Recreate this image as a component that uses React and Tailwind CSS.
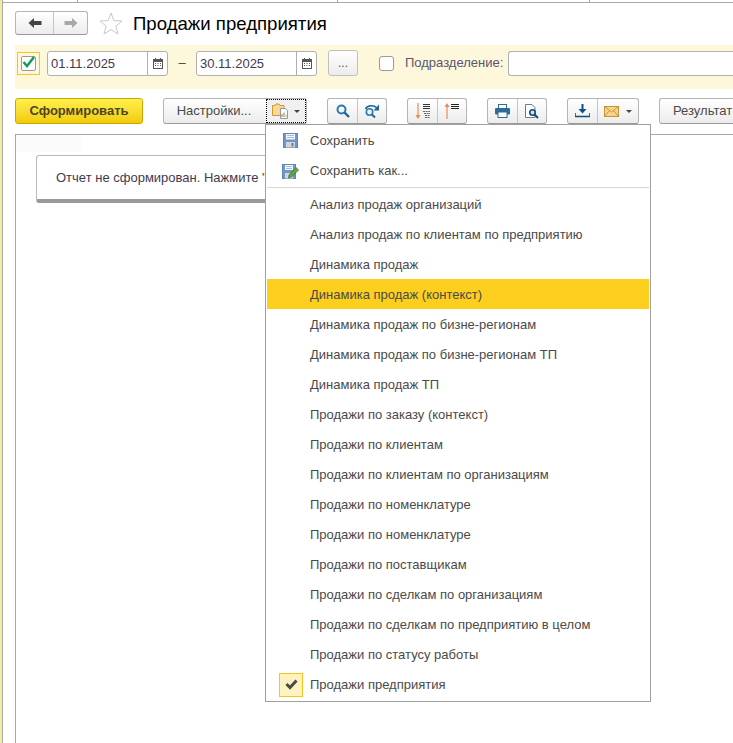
import React from "react";

const menuItems = [
  "Анализ продаж организаций",
  "Анализ продаж по клиентам по предприятию",
  "Динамика продаж",
  "Динамика продаж (контекст)",
  "Динамика продаж по бизне-регионам",
  "Динамика продаж по бизне-регионам ТП",
  "Динамика продаж ТП",
  "Продажи по заказу (контекст)",
  "Продажи по клиентам",
  "Продажи по клиентам по организациям",
  "Продажи по номенклатуре",
  "Продажи по номенклатуре",
  "Продажи по поставщикам",
  "Продажи по сделкам по организациям",
  "Продажи по сделкам по предприятию в целом",
  "Продажи по статусу работы",
  "Продажи предприятия",
];

const ArrowIcon = ({ color, flip }) => (
  <svg width="14" height="12" viewBox="0 0 14 12" className={flip ? "-scale-x-100" : ""}>
    <path d="M0.5 6 L6 1 V4 H13.5 V8 H6 V11 Z" fill={color} />
  </svg>
);

const CalendarIcon = () => (
  <svg width="10" height="11" viewBox="0 0 10 11">
    <rect x="0.5" y="1.5" width="9" height="9" fill="#fff" stroke="#555" />
    <rect x="0" y="1" width="10" height="3" fill="#555" />
    <rect x="2" y="0" width="1" height="2" fill="#555" />
    <rect x="7" y="0" width="1" height="2" fill="#555" />
    <path d="M2 5.5h1M4.5 5.5h1M7 5.5h1M2 7.5h1M4.5 7.5h1M7 7.5h1" stroke="#555" />
  </svg>
);

const SearchIcon = () => (
  <svg width="14" height="14" viewBox="0 0 14 14">
    <circle cx="5.5" cy="5.5" r="4" fill="none" stroke="#2a7ab0" strokeWidth="2" />
    <path d="M8.5 8.5 L13 13" stroke="#1d6596" strokeWidth="2.4" />
  </svg>
);

const RefreshSearchIcon = () => (
  <svg width="16" height="15" viewBox="0 0 16 15">
    <path d="M1.5 5 C3 1.5 9 0.5 12.5 3.5" fill="none" stroke="#1d6596" strokeWidth="1.6" />
    <path d="M15 0.5 V6.5 H9.5 Z" fill="#1d6596" />
    <circle cx="5.5" cy="8" r="3.2" fill="none" stroke="#2a7ab0" strokeWidth="1.6" />
    <path d="M8 10.5 L11 13.5" stroke="#1d6596" strokeWidth="2" />
  </svg>
);

const SortDownIcon = () => (
  <svg width="16" height="16" viewBox="0 0 16 16">
    <path d="M3 0 V13" stroke="#ee8a55" strokeWidth="1.2" />
    <path d="M0.5 12 H5.5 L3 16 Z" fill="#ee8a55" />
    <path d="M8 1.5h7M8 3.5h7M8 5.5h7" stroke="#333" strokeWidth="1" />
    <path d="M8 8.5h7M9 10.5h6M10 12.5h5M10 14.5h5" stroke="#666" strokeWidth="1" strokeDasharray="2 0.6" />
  </svg>
);

const SortUpIcon = () => (
  <svg width="16" height="16" viewBox="0 0 16 16">
    <path d="M3 3 V16" stroke="#ee8a55" strokeWidth="1.2" />
    <path d="M0.5 4 H5.5 L3 0 Z" fill="#ee8a55" />
    <path d="M7 1.5h8M7 3.5h8M7 5.5h8" stroke="#222" strokeWidth="1" />
  </svg>
);

const PrintIcon = () => (
  <svg width="15" height="14" viewBox="0 0 15 14">
    <rect x="3.5" y="0.5" width="8" height="5" fill="#fff" stroke="#2f6a99" />
    <rect x="0" y="4" width="15" height="6.5" rx="1" fill="#2f6a99" />
    <rect x="3" y="8" width="9" height="5.5" fill="#fff" stroke="#2f6a99" />
  </svg>
);

const PreviewIcon = () => (
  <svg width="15" height="15" viewBox="0 0 15 15">
    <path d="M0.5 0.5 H7 L10 3.5 V13.5 H0.5 Z" fill="#fff" stroke="#5d7f9b" />
    <circle cx="7.5" cy="8.5" r="2.7" fill="#cfe3f2" stroke="#104a75" strokeWidth="1.6" />
    <path d="M9.5 10.5 L13 14" stroke="#104a75" strokeWidth="2" />
  </svg>
);

const DownloadIcon = () => (
  <svg width="15" height="14" viewBox="0 0 15 14">
    <path d="M7.5 0 V6" stroke="#0f4f7e" strokeWidth="2" />
    <path d="M3.5 5 H11.5 L7.5 9.5 Z" fill="#0f4f7e" />
    <path d="M0 9 V12.5 H15 V9" fill="none" stroke="#0f4f7e" strokeWidth="1.6" />
  </svg>
);

const MailIcon = () => (
  <svg width="15" height="11" viewBox="0 0 15 11">
    <rect x="0.5" y="0.5" width="14" height="10" fill="#f6d48a" stroke="#c8933a" />
    <path d="M0.5 0.5 L7.5 6 L14.5 0.5 M0.5 10.5 L5.5 4.5 M14.5 10.5 L9.5 4.5" fill="none" stroke="#c8933a" />
  </svg>
);

const ReportsIcon = () => (
  <svg width="18" height="16" viewBox="0 0 18 16" className="shrink-0">
    <path d="M0.5 2.5 H3 L4 1 H7 L8 2.5 H12 V12.5 H0.5 Z" fill="#f8d98d" stroke="#c9983f" />
    <path d="M8.5 5.5 H13.5 L15.5 7.5 V15.5 H8.5 Z" fill="#fff" stroke="#8a9aa8" />
    <path d="M10 14v-3" stroke="#d8503a" />
    <path d="M12 14v-4.5" stroke="#55a050" />
    <path d="M14 14v-2" stroke="#d8a03a" />
  </svg>
);

const SaveIcon = () => (
  <svg width="15" height="15" viewBox="0 0 15 15">
    <rect x="0.5" y="0.5" width="14" height="14" fill="#6f96c6" stroke="#5f86b5" />
    <rect x="3" y="1" width="9" height="5.5" fill="#f2f6fa" />
    <path d="M4 2.5h7M4 4.5h7" stroke="#a5bdd8" />
    <rect x="3" y="9" width="9" height="5.5" fill="#d2d5da" />
    <rect x="8.5" y="10" width="2" height="3.5" fill="#6d7d90" />
  </svg>
);

const SaveAsIcon = () => (
  <svg width="17" height="16" viewBox="0 0 17 16">
    <rect x="0.5" y="1.5" width="13" height="14" fill="#6f96c6" stroke="#5f86b5" />
    <rect x="3" y="2" width="8" height="5" fill="#f2f6fa" />
    <path d="M4 3.5h6M4 5.5h6" stroke="#a5bdd8" />
    <rect x="3" y="10" width="8" height="5.5" fill="#d2d5da" />
    <path d="M7 12 L14 4.5 L16.5 7 L9.5 14 L6.5 15 Z" fill="#5fa83f" stroke="#3d7a2a" strokeWidth="0.8" />
  </svg>
);

const CheckMark = () => (
  <svg width="13" height="11" viewBox="0 0 13 11">
    <path d="M1.5 5 L5 8.5 L11.5 1.5" fill="none" stroke="#4a4a4a" strokeWidth="3" />
  </svg>
);

const Caret = () => <span className="h-0 w-0 border-x-[3px] border-t-[3px] border-x-transparent border-t-[#444]" />;

const btnBg = "bg-gradient-to-b from-white to-[#ececec]";

const ButtonGroup = ({ className, children }) => (
  <div className={`flex h-[26px] shrink-0 rounded-[3px] border border-[#b4b4b4] border-b-[#999] ${btnBg} ${className}`}>
    {children}
  </div>
);

const IconCell = ({ width, divider, children }) => (
  <div className={`flex h-full items-center justify-center ${width} ${divider ? "border-l border-[#c4c4c4]" : ""}`}>
    {children}
  </div>
);

const DateInput = ({ value, className }) => (
  <div className={`flex h-[25px] w-[121px] shrink-0 rounded-[3px] border border-[#b0b0b0] bg-white ${className}`}>
    <span className="flex-1 pl-[3px] text-[13px] leading-[24px] text-[#3f3a52]">{value}</span>
    <span className="flex w-[20px] items-center justify-center border-l border-[#b0b0b0]">
      <CalendarIcon />
    </span>
  </div>
);

const App = () => {
  return (
    <div className="relative flex h-[743px] w-[733px] overflow-hidden bg-white font-['Liberation_Sans',Arial,sans-serif]">
      <div className="h-full w-[2px] shrink-0 bg-[#f6e9a2]" />
      <div className="flex min-w-0 flex-1 flex-col border-l border-[#a8a8a8]">
        {/* window top rule */}
        <div className="flex h-[3px] shrink-0 border-b border-[#a8a8a8] pl-[74px]">
          <div className="h-full w-[261px] border-x border-[#a8a8a8]" />
          <div className="ml-[251px] h-full w-px bg-[#a8a8a8]" />
        </div>

        {/* title row */}
        <div className="mt-[8px] flex h-[24px] shrink-0 items-center pl-3">
          <ButtonGroup className="w-[73px] !h-[24px]">
            <IconCell width="w-[37px]">
              <ArrowIcon color="#444" />
            </IconCell>
            <IconCell width="flex-1" divider>
              <ArrowIcon color="#a9a9a9" flip />
            </IconCell>
          </ButtonGroup>
          <svg width="24" height="23" viewBox="0 0 24 23" className="ml-[11px] shrink-0">
            <path
              d="M12 1 L15 8.6 L23 9 L16.8 14.2 L19 22 L12 17.6 L5 22 L7.2 14.2 L1 9 L9 8.6 Z"
              fill="#fff"
              stroke="#c3c8d2"
            />
          </svg>
          <h1 className="ml-[10px] mt-[1px] text-[18.6px] font-normal text-black">Продажи предприятия</h1>
        </div>

        {/* filter band */}
        <div className="ml-3 mt-[10px] h-[44px] shrink-0 bg-[#fdf8dc] pt-[5px]">
          <div className="flex h-[26px] items-center">
            <div className="ml-[2px] flex h-[23px] w-[23px] shrink-0 items-center justify-center border border-[#f3c71b]">
              <div className="flex h-[15px] w-[15px] items-center justify-center rounded-[2px] border border-[#9a9a9a] bg-white">
                <svg width="13" height="12" viewBox="0 0 13 12" className="-mt-[2px] overflow-visible">
                  <path d="M1.5 6 L5 10 L12 1" fill="none" stroke="#0f9d58" strokeWidth="2.4" />
                </svg>
              </div>
            </div>
            <DateInput value="01.11.2025" className="ml-[7px]" />
            <span className="w-[28px] shrink-0 text-center text-[13px] text-[#444]">–</span>
            <DateInput value="30.11.2025" />
            <div className={`ml-[11px] flex h-[26px] w-[30px] shrink-0 items-center justify-center rounded-[3px] border border-[#c0c0c0] text-[12px] text-[#555] ${btnBg}`}>
              ...
            </div>
            <div className="ml-[21px] h-[15px] w-[15px] shrink-0 rounded-[3px] border border-[#9a9a9a] bg-white" />
            <span className="ml-[11px] shrink-0 text-[13px] text-[#5a5470]">Подразделение:</span>
            <div className="ml-[5px] h-[25px] flex-1 rounded-l-[3px] border border-r-0 border-[#b0b0b0] bg-white" />
          </div>
        </div>

        {/* command bar */}
        <div className="ml-3 mt-[9px] flex h-[26px] shrink-0 items-center overflow-hidden">
          <div className="flex h-[26px] w-[128px] shrink-0 items-center justify-center rounded-[3px] border border-[#c8a900] bg-gradient-to-b from-[#fff04a] to-[#f2cb00] text-[13px] font-bold text-[#4d4520]">
            Сформировать
          </div>
          <ButtonGroup className="ml-[20px] w-[144px]">
            <div className="flex w-[100px] items-center justify-center text-[13px] text-[#4a4a4a]">Настройки...</div>
            <div className="ml-[2px] flex flex-1 items-center justify-center gap-[4px] border border-dotted border-black bg-[#f0f0f0]">
              <ReportsIcon />
              <Caret />
            </div>
          </ButtonGroup>
          <ButtonGroup className="ml-[20px] w-[60px]">
            <IconCell width="w-[29px]">
              <SearchIcon />
            </IconCell>
            <IconCell width="flex-1" divider>
              <RefreshSearchIcon />
            </IconCell>
          </ButtonGroup>
          <ButtonGroup className="ml-[20px] w-[60px]">
            <IconCell width="w-[29px]">
              <SortDownIcon />
            </IconCell>
            <IconCell width="flex-1" divider>
              <SortUpIcon />
            </IconCell>
          </ButtonGroup>
          <ButtonGroup className="ml-[20px] w-[60px]">
            <IconCell width="w-[29px]">
              <PrintIcon />
            </IconCell>
            <IconCell width="flex-1" divider>
              <PreviewIcon />
            </IconCell>
          </ButtonGroup>
          <ButtonGroup className="ml-[20px] w-[72px]">
            <IconCell width="w-[29px]">
              <DownloadIcon />
            </IconCell>
            <IconCell width="flex-1 gap-[7px]" divider>
              <MailIcon />
              <Caret />
            </IconCell>
          </ButtonGroup>
          <ButtonGroup className="ml-[20px] w-[90px] rounded-r-none border-r-0">
            <div className="flex items-center pl-[13px] text-[13px] text-[#4a4a4a]">Результат</div>
          </ButtonGroup>
        </div>

        {/* report area */}
        <div className="relative ml-3 mt-[10px] min-h-0 flex-1 border-l border-t border-[#a8a8a8] pl-[20px] pt-[20px]">
          <div className="absolute left-0 top-0 h-[17px] w-[66px] bg-[#fbfbfb]" />
          <div className="relative flex h-[48px] w-[500px] items-center whitespace-nowrap rounded-[3px] border border-b-[4px] border-[#b8b8b8] border-b-[#9a9a9a] bg-white pl-[19px] text-[13px] text-[#3f3a52]">
            Отчет не сформирован. Нажмите "Сформировать" для получения отчета.
          </div>
        </div>
      </div>

      {/* dropdown menu */}
      <div className="absolute left-[265px] top-[124px] h-[578px] w-[386px] border border-[#a0a0a0] bg-white text-[13px] text-[#4a4a4a]">
        <div className="flex h-[30px] items-center pt-px">
          <span className="flex w-[44px] justify-center pl-[5px]">
            <SaveIcon />
          </span>
          Сохранить
        </div>
        <div className="flex h-[30px] items-center pt-px">
          <span className="flex w-[44px] justify-center pl-[5px]">
            <SaveAsIcon />
          </span>
          Сохранить как...
        </div>
        <div className="mx-px mt-[2px] mb-px h-px bg-[#d8d6cf]" />
        {menuItems.map((item, i) => {
          const active = item === "Динамика продаж (контекст)";
          const checked = i === menuItems.length - 1;
          return (
            <div key={i} className={`mx-px flex h-[30px] items-center pt-px ${active ? "bg-[#fccf1f]" : ""}`}>
              <span className="flex w-[43px] justify-center pl-[5px]">
                {checked && (
                  <span className="flex h-[24px] w-[24px] items-center justify-center border border-[#f3c71b] bg-[#fdf2c0]">
                    <CheckMark />
                  </span>
                )}
              </span>
              {item}
            </div>
          );
        })}
      </div>
    </div>
  );
};

export default App;
